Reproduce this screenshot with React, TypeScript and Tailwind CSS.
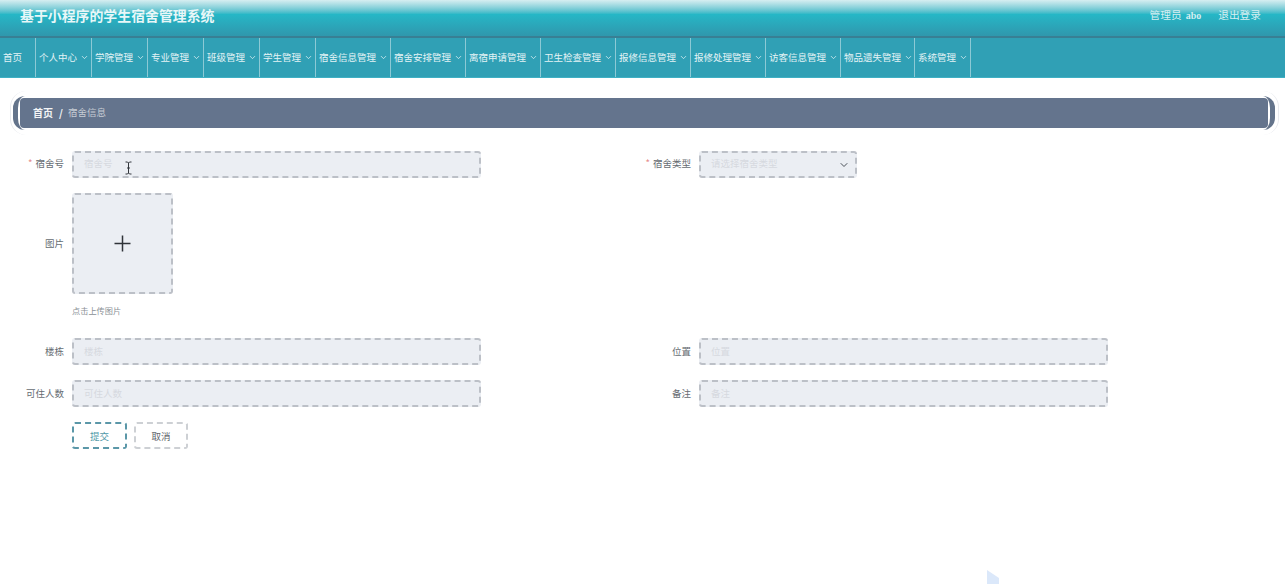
import { ChevronDown } from "lucide-react";

const cjk = "font-['Noto_Sans_CJK_SC','Liberation_Sans',sans-serif]";

const navItems: [string, string][] = [
  ["个人中心", "w-[56px]"],
  ["学院管理", "w-[56px]"],
  ["专业管理", "w-[56px]"],
  ["班级管理", "w-[56px]"],
  ["学生管理", "w-[56px]"],
  ["宿舍信息管理", "w-[75px]"],
  ["宿舍安排管理", "w-[75px]"],
  ["离宿申请管理", "w-[75px]"],
  ["卫生检查管理", "w-[75px]"],
  ["报修信息管理", "w-[75px]"],
  ["报修处理管理", "w-[75px]"],
  ["访客信息管理", "w-[75px]"],
  ["物品遗失管理", "w-[74px]"],
  ["系统管理", "w-[56px]"],
];

function Label({ text, required, lift }: { text: string; required?: boolean; lift?: boolean }) {
  return (
    <div className={`w-[72px] shrink-0 pr-2 text-right text-[9.5px] text-[#666c72] ${lift ? "pb-[2px]" : ""}`}>
      {required && <span className="mr-[3px] text-[#e58a8a]">*</span>}
      {text}
    </div>
  );
}

function Field({ placeholder, lift }: { placeholder: string; lift?: boolean }) {
  return (
    <div className={`flex h-[27px] w-[409px] items-center rounded-[3px] border-2 border-dashed border-[#bcc0c7] bg-[#ebeef3] pl-[10px] text-[9.5px] text-[#d6d9df] ${lift ? "pb-[2px]" : ""}`}>
      {placeholder}
    </div>
  );
}

export default function App() {
  return (
    <div className={`relative h-[584px] w-[1285px] overflow-hidden bg-white ${cjk}`}>
      <header className="flex h-[38px] items-center justify-between border-b-2 border-[#387f94] bg-gradient-to-b from-[#d6eef1] via-[#25b7c6] via-40% to-[#2f97ad] pb-[5px] pl-[20px] pr-[24px]">
        <div className="text-[13.9px] font-bold leading-none text-[#e8f7f8]">基于小程序的学生宿舍管理系统</div>
        <div className="flex items-center text-[10.7px] text-[#d5eef1]">
          <span>管理员</span>
          <span className="ml-[4px] font-['Liberation_Serif',serif] text-[10px] font-bold">abo</span>
          <span className="ml-[17px]">退出登录</span>
        </div>
      </header>

      <nav className="flex h-[40px] items-stretch border-b border-[#3fb0c4] bg-[#30a0b5] text-[9.5px] text-[#e4f3f6]">
        <div className="flex w-[36px] items-center border-r border-[#8cc9d5] pl-[3px]">首页</div>
        {navItems.map(([name, w]) => (
          <div key={name} className={`flex ${w} items-center gap-[3px] border-r border-[#8cc9d5] pl-[3px]`}>
            <span className="whitespace-nowrap">{name}</span>
            <ChevronDown size={9} strokeWidth={2} />
          </div>
        ))}
      </nav>

      <div className="pl-[10px] pt-[13px]">
        <div className="flex h-[44px] w-[1269px] items-center rounded-[16px] border-x border-[#e8eaee] pl-[2px] pr-[3px]">
          <div className="flex h-[34px] w-[1262px] items-center rounded-[12px] border-x-[5px] border-[#64748b] px-[2px]">
            <div className="flex h-[30px] grow items-center rounded-[4px] bg-[#64748d] pb-[2px] pl-[13px] text-[10px] text-[#f3f4f6]">
              <span className="font-bold">首页</span>
              <span className="ml-[6px] mr-[5px] font-bold">/</span>
              <span className="text-[9.5px] text-[#c7ccd4]">宿舍信息</span>
            </div>
          </div>
        </div>
      </div>

      <main className="pt-[16px]">
        <div className="flex items-center">
          <div className="flex w-[627px] items-center">
            <Label text="宿舍号" required lift />
            <Field placeholder="宿舍号" lift />
          </div>
          <Label text="宿舍类型" required lift />
          <div className="flex h-[27px] w-[158px] items-center justify-between rounded-[3px] border-2 border-dashed border-[#bcc0c7] bg-[#ebeef3] pl-[10px] pr-[5px] text-[9.5px] text-[#d6d9df]">
            <span className="pb-[2px]">请选择宿舍类型</span>
            <ChevronDown size={12} strokeWidth={2} className="text-[#4a5058]" />
          </div>
        </div>

        <div className="mt-[15px] flex items-center">
          <Label text="图片" />
          <div className="flex h-[101px] w-[101px] items-center justify-center rounded-[3px] border-2 border-dashed border-[#bcc0c7] bg-[#ebeef3]">
            <svg width="17" height="17" viewBox="0 0 17 17" className="text-[#2f3338]">
              <path d="M8.5 0.5V16.5M0.5 8.5H16.5" stroke="currentColor" strokeWidth="1.5" fill="none" />
            </svg>
          </div>
        </div>
        <div className="ml-[72px] mt-[10px] text-[8.2px] leading-[13px] text-[#8a9096]">点击上传图片</div>

        <div className="mt-[21px] flex items-center">
          <div className="flex w-[627px] items-center">
            <Label text="楼栋" />
            <Field placeholder="楼栋" />
          </div>
          <Label text="位置" />
          <Field placeholder="位置" />
        </div>

        <div className="mt-[15px] flex items-center">
          <div className="flex w-[627px] items-center">
            <Label text="可住人数" />
            <Field placeholder="可住人数" />
          </div>
          <Label text="备注" />
          <Field placeholder="备注" />
        </div>

        <div className="ml-[72px] mt-[15px] flex gap-[7px] text-[9.5px]">
          <div className="flex h-[27px] w-[55px] items-center justify-center rounded-[3px] border-2 border-dashed border-[#5b97a8] pt-[1px] text-[#4f98a8]">提交</div>
          <div className="flex h-[27px] w-[54px] items-center justify-center rounded-[3px] border-2 border-dashed border-[#cdd0d4] pt-[1px] text-[#5f656b]">取消</div>
        </div>
      </main>

      <svg width="9" height="14" viewBox="0 0 9 14" className="absolute left-[124px] top-[161px] text-[#33373c]">
        <path d="M1.5 1H3.5L4.5 2L5.5 1H7.5M4.5 2V12M1.5 13H3.5L4.5 12L5.5 13H7.5M3 7H6" stroke="currentColor" strokeWidth="1" fill="none" />
      </svg>

      <svg width="12" height="14" viewBox="0 0 12 14" className="absolute left-[987px] top-[570px]">
        <path d="M0 0L12 8V14H0Z" fill="#dbe8fa" />
      </svg>
    </div>
  );
}
